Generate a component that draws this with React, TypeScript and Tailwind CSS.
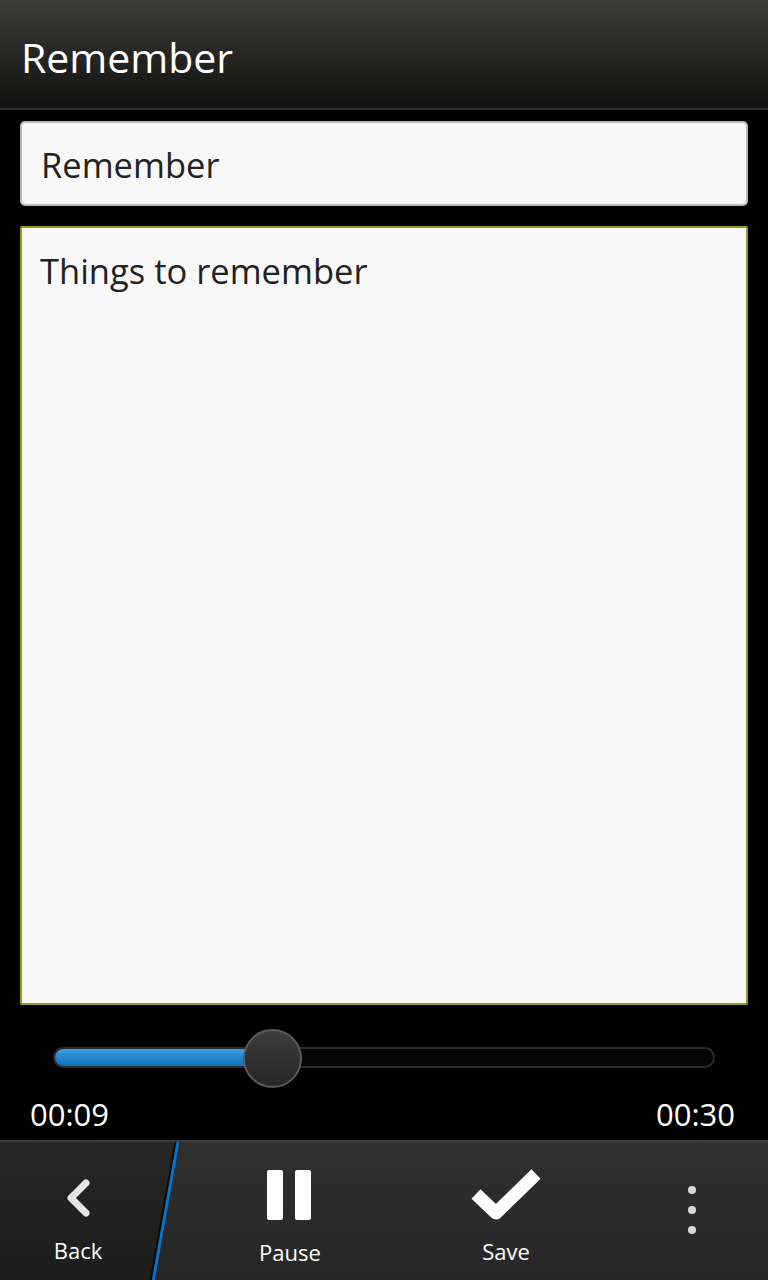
import React from 'react';

const font = { fontFamily: '"Open Sans", "Noto Sans", sans-serif' };

function BackCell() {
  return (
    <div className="relative w-[180px] h-full shrink-0">
      {/* darker slanted back panel + blue divider */}
      <svg className="absolute inset-0" width="180" height="140" viewBox="0 0 180 140">
        <defs>
          <linearGradient id="backbg" x1="0" y1="0" x2="0" y2="1">
            <stop offset="0" stopColor="#262626" />
            <stop offset="1" stopColor="#1c1c1c" />
          </linearGradient>
        </defs>
        <polygon points="0,0 176,0 150,140 0,140" fill="url(#backbg)" />
        <line x1="177" y1="0" x2="152" y2="140" stroke="#0a0a0a" strokeWidth="5" />
        <line x1="178" y1="0" x2="153" y2="140" stroke="#0a72c8" strokeWidth="3" />
      </svg>
      <div className="relative flex flex-col items-center w-[156px] pt-[36px]">
        <svg width="26" height="40" viewBox="0 0 26 40">
          <polyline points="21,5 6,20 21,35" fill="none" stroke="#e6e6e6" strokeWidth="7" strokeLinecap="round" strokeLinejoin="round" />
        </svg>
        <span className="text-white text-[22px] leading-none mt-[21px]">Back</span>
      </div>
    </div>
  );
}

export default function App() {
  return (
    <div className="w-[768px] h-[1280px] bg-black flex flex-col overflow-hidden" style={font}>
      {/* title bar */}
      <div className="h-[110px] shrink-0 bg-gradient-to-b from-[#3d3e3c] to-[#111210] border-b-2 border-[#2e2e2e] flex items-center pl-[21px] pt-[6px]">
        <h1 className="text-white text-[41px] leading-none">Remember</h1>
      </div>

      <div className="flex flex-col px-[20px] pt-[11px] gap-[20px]">
        <div className="h-[85px] bg-[#f8f8f8] border-2 border-[#b9b9b9] rounded-[5px] flex items-center pl-[19px] pt-[3px]">
          <span className="text-[#222] text-[34.5px] leading-none">Remember</span>
        </div>
        <div className="h-[779px] bg-[#f8f8f8] border-2 border-[#999a14] rounded-[2px] pl-[18px] pt-[26px]">
          <span className="text-[#222] text-[34.5px] leading-none">Things to remember</span>
        </div>
      </div>

      {/* slider */}
      <div className="relative mt-[42px] mx-[53px] h-[21px] rounded-full border-2 border-[#2b2b2b] bg-[#050505]">
        <div className="absolute left-0 top-0 bottom-0 w-[216px] rounded-full bg-gradient-to-b from-[#3b9ee0] to-[#0c6fbb]" />
        <div className="absolute left-[188px] top-[-20px] w-[59px] h-[59px] rounded-full border-2 border-[#5a5a5a] bg-gradient-to-b from-[#3c3c3c] to-[#272727]" />
      </div>

      <div className="flex justify-between pl-[30px] pr-[33px] mt-[31px]">
        <span className="text-white text-[31px] leading-none">00:09</span>
        <span className="text-white text-[31px] leading-none">00:30</span>
      </div>

      {/* action bar */}
      <div className="mt-auto h-[140px] shrink-0 bg-gradient-to-b from-[#303030] to-[#262626] border-t-2 border-[#3c3c3c] flex">
        <BackCell />
        <div className="w-[216px] flex flex-col items-center pt-[28px] ml-[2px]">
          <svg width="46" height="50" viewBox="0 0 46 50">
            <rect x="0" y="0" width="16" height="50" rx="2" fill="#fff" />
            <rect x="28" y="0" width="16" height="50" rx="2" fill="#fff" />
          </svg>
          <span className="text-white text-[22px] leading-none mt-[21px]">Pause</span>
        </div>
        <div className="w-[216px] flex flex-col items-center pt-[25px]">
          <svg width="72" height="56" viewBox="0 0 72 56">
            <polyline points="6,27 26,46 66,7" fill="none" stroke="#fff" strokeWidth="13" strokeLinejoin="round" />
          </svg>
          <span className="text-white text-[22px] leading-none mt-[17px]">Save</span>
        </div>
        <div className="flex-1 flex flex-col items-center pt-[44px] gap-[12px] pl-[2px]">
          <span className="w-[8px] h-[8px] rounded-full bg-[#d8d8d8]" />
          <span className="w-[8px] h-[8px] rounded-full bg-[#d8d8d8]" />
          <span className="w-[8px] h-[8px] rounded-full bg-[#d8d8d8]" />
        </div>
      </div>
    </div>
  );
}
